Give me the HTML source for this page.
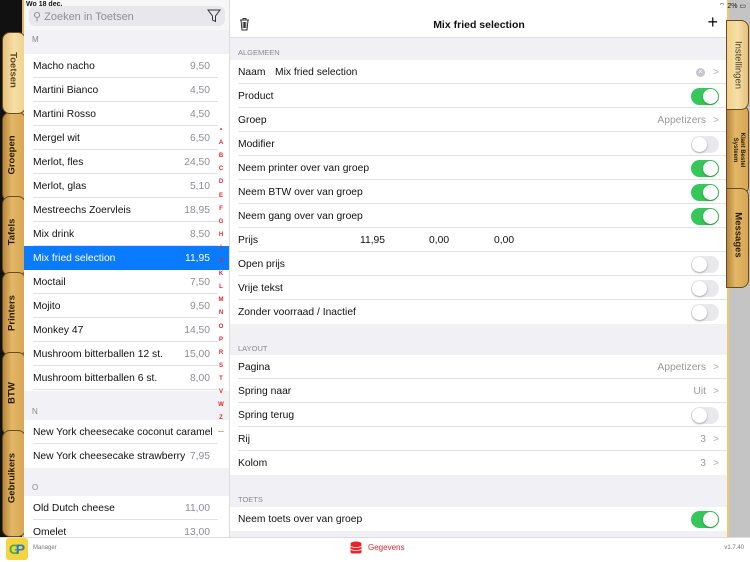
<!DOCTYPE html>
<html><head><meta charset="utf-8"><style>
*{margin:0;padding:0;box-sizing:border-box}
body{width:750px;height:562px;overflow:hidden;font-family:"Liberation Sans",sans-serif;font-size:10.3px;color:#111;background:#fff;position:relative}
.a{position:absolute}
.row{position:absolute;height:24px;line-height:24px;left:0;right:0}
.row>span{top:1px}
.ln{position:absolute;bottom:0;height:1px;background:#e2e2e6}
.tab{position:absolute;background:linear-gradient(90deg,#b8863e,#e2b766 40%,#d6a654);border-radius:8px;border:1px solid #6b4a1c}
.tv{position:absolute;white-space:nowrap;font-weight:bold;font-size:9.5px;color:#2a1a05}
.sw{position:absolute;width:28px;height:17px;border-radius:9px;right:9px;top:4px}
.on{background:#35c759}.off{background:#e9e9eb}
.sw i{position:absolute;top:1px;width:15px;height:15px;border-radius:50%;background:#fff;box-shadow:0 1px 2px rgba(0,0,0,.3)}
.on i{right:1px}.off i{left:1px}
.gv{position:absolute;right:22px;color:#9a9a9e}
.chev{position:absolute;right:9px;color:#b0b0b4;font-size:10px}
.sect{position:absolute;left:8px;font-size:7.5px;color:#8a8a8e}
</style></head><body>
<div class="a" style="left:0;top:0;width:24px;height:537px;background:#111"></div>
<div class="a" style="left:22px;top:0;width:2px;height:537px;background:#e0b560"></div>
<div class="tab" style="left:2px;top:112px;width:24px;height:90px"></div>
<div class="tab" style="left:2px;top:196px;width:24px;height:80px"></div>
<div class="tab" style="left:2px;top:272px;width:24px;height:84px"></div>
<div class="tab" style="left:2px;top:352px;width:24px;height:84px"></div>
<div class="tab" style="left:2px;top:430px;width:24px;height:107px"></div>
<div class="tab" style="left:2px;top:32px;width:24px;height:82px;background:linear-gradient(90deg,#e6c07a,#f6dfa8 50%,#f0d08a)"></div>
<div class="tv" style="left:13px;top:70px;transform:translate(-50%,-50%) rotate(90deg);color:#5a4520">Toetsen</div>
<div class="tv" style="left:12px;top:155px;transform:translate(-50%,-50%) rotate(-90deg)">Groepen</div>
<div class="tv" style="left:12px;top:232px;transform:translate(-50%,-50%) rotate(-90deg)">Tafels</div>
<div class="tv" style="left:12px;top:313px;transform:translate(-50%,-50%) rotate(-90deg)">Printers</div>
<div class="tv" style="left:12px;top:393px;transform:translate(-50%,-50%) rotate(-90deg)">BTW</div>
<div class="tv" style="left:12px;top:478px;transform:translate(-50%,-50%) rotate(-90deg)">Gebruikers</div>

<div class="a" style="left:24px;top:0;width:206px;height:537px;background:#fff;overflow:hidden">
 <div class="a" style="left:0;top:0;width:206px;height:30px;background:#f7f7f7"></div>
 <div class="a" style="left:2px;top:1px;font-size:7px;font-weight:bold">Wo 18 dec.</div>
 <div class="a" style="left:5px;top:6px;width:196px;height:20px;border-radius:6px;background:#e8e8ec"></div>
 <div class="a" style="left:9px;top:10px;font-size:11px;color:#8e8e93">⚲ Zoeken in Toetsen</div>
 <svg class="a" style="left:183px;top:9px" width="14" height="14" viewBox="0 0 14 14"><path d="M1 1h12L8.5 7v5.5L5.5 11V7z" fill="none" stroke="#333" stroke-width="1"/></svg>
 <div class="a" style="left:0;top:30px;width:206px;height:24px;background:#f2f2f6"></div>
 <div class="a" style="left:8px;top:35px;font-size:8px;color:#888">M</div>
 <div id="list"></div>
</div>
<div class="a" style="left:229px;top:0;width:1px;height:537px;background:#ddd"></div>

<div class="a" style="left:230px;top:0;width:498px;height:537px;background:#f0f0f5;overflow:hidden">
 <div class="a" style="left:0;top:0;width:498px;height:38px;background:#fff;border-bottom:1px solid #ddd"></div>
 <svg class="a" style="left:9px;top:17px" width="11" height="14" viewBox="0 0 11 14"><path d="M1 3h9M4 3V1.5h3V3M2 3l1 10h5l1-10M4.2 5v6M5.5 5v6M6.8 5v6" fill="none" stroke="#333" stroke-width="1"/></svg>
 <div class="a" style="left:0;width:498px;top:19px;text-align:center;font-size:10.5px;font-weight:bold">Mix fried selection</div>
 <div class="a" style="right:10px;top:12px;font-size:18px;font-weight:300">+</div>
 <div class="sect" style="top:48px">ALGEMEEN</div>
 <div class="sect" style="top:344px">LAYOUT</div>
 <div class="sect" style="top:495px">TOETS</div>
 <div id="rows"></div>
</div>

<div class="a" style="left:728px;top:0;width:22px;height:537px;background:#c4c4c4"></div>
<div class="a" style="left:727px;top:0;width:2px;height:537px;background:#f0c86e"></div>
<div class="tab" style="left:726px;top:105px;width:23px;height:90px;border-radius:0 8px 8px 0"></div>
<div class="tab" style="left:726px;top:188px;width:23px;height:100px;border-radius:0 8px 8px 0"></div>
<div class="tab" style="left:726px;top:20px;width:23px;height:90px;border-radius:0 8px 8px 0;background:linear-gradient(90deg,#f0d08a,#f6dfa8 50%,#e6c07a)"></div>
<div class="tv" style="left:738px;top:65px;transform:translate(-50%,-50%) rotate(90deg);font-weight:normal;color:#4a3a20">Instellingen</div>
<div class="tv" style="left:738px;top:150px;transform:translate(-50%,-50%) rotate(90deg);font-size:6px;text-align:center;line-height:7px">Klant Bestel<br>Systeem</div>
<div class="tv" style="left:738px;top:235px;transform:translate(-50%,-50%) rotate(90deg)">Messages</div>
<div class="a" style="right:4px;top:2px;font-size:7px">⌔ 2% ▭</div>

<div class="a" style="left:0;top:537px;width:750px;height:25px;background:#fff;border-top:1px solid #ddd"></div>
<div class="a" style="left:6px;top:538px;width:22px;height:22px;background:#f5d341;border-radius:3px;font-weight:bold;font-size:14px;line-height:22px;text-align:center"><span style="color:#47b04b">G</span><span style="color:#2a7ec8;margin-left:-4px">P</span></div>
<div class="a" style="left:33px;top:545px;font-size:6px;color:#777">Manager</div>
<svg class="a" style="left:350px;top:541px" width="12" height="14" viewBox="0 0 12 14"><ellipse cx="6" cy="2.5" rx="5.5" ry="2" fill="#e8242b"/><rect x=".5" y="2.5" width="11" height="10" rx="2" fill="#e8242b"/><path d="M.5 5.5q5.5 2 11 0M.5 8.5q5.5 2 11 0" stroke="#fff" stroke-width=".7" fill="none"/></svg>
<div class="a" style="left:368px;top:543px;font-size:8px;color:#e8242b">Gegevens</div>
<div class="a" style="right:6px;top:545px;font-size:6px;color:#777">v1.7.40</div>

<script>
var items=[["Macho nacho","9,50"],["Martini Bianco","4,50"],["Martini Rosso","4,50"],["Mergel wit","6,50"],["Merlot, fles","24,50"],["Merlot, glas","5,10"],["Mestreechs Zoervleis","18,95"],["Mix drink","8,50"],["Mix fried selection","11,95"],["Moctail","7,50"],["Mojito","9,50"],["Monkey 47","14,50"],["Mushroom bitterballen 12 st.","15,00"],["Mushroom bitterballen 6 st.","8,00"]];
var h="",y=54;
items.forEach(function(it,i){var sel=i==8;
h+='<div class="row" style="top:'+y+'px;'+(sel?'background:#0a7aff;color:#fff':'')+'"><span style="position:absolute;left:9px">'+it[0]+'</span><span style="position:absolute;right:20px;color:'+(sel?'#fff':'#8e8e93')+'">'+it[1]+'</span>'+(sel?'':'<div class="ln" style="left:9px;right:12px"></div>')+'</div>';y+=24;});
h+='<div class="a" style="left:0;top:391px;width:206px;height:29px;background:#f2f2f6"></div><div class="a" style="left:8px;top:407px;font-size:8px;color:#888">N</div>';
h+='<div class="row" style="top:420px"><span style="position:absolute;left:9px">New York cheesecake coconut caramel</span><span style="position:absolute;right:20px;color:#8e8e93">...</span><div class="ln" style="left:9px;right:12px"></div></div>';
h+='<div class="row" style="top:444px"><span style="position:absolute;left:9px">New York cheesecake strawberry</span><span style="position:absolute;right:20px;color:#8e8e93">7,95</span></div>';
h+='<div class="a" style="left:0;top:468px;width:206px;height:28px;background:#f2f2f6"></div><div class="a" style="left:8px;top:483px;font-size:8px;color:#888">O</div>';
h+='<div class="row" style="top:496px"><span style="position:absolute;left:9px">Old Dutch cheese</span><span style="position:absolute;right:20px;color:#8e8e93">11,00</span><div class="ln" style="left:9px;right:12px"></div></div>';
h+='<div class="row" style="top:520px"><span style="position:absolute;left:9px">Omelet</span><span style="position:absolute;right:20px;color:#8e8e93">13,00</span></div>';
var L="•ABCDEFGHIJKLMNOPRSTVWZ…".split("");
L.forEach(function(c,i){h+='<div class="a" style="left:192px;width:10px;text-align:center;top:'+(127+i*13.1)+'px;font-size:6px;font-weight:bold;color:#e8242b">'+c+'</div>';});
document.getElementById("list").innerHTML=h;
var R=[[60,"Naam","naam"],[84,"Product","on"],[108,"Groep","g:Appetizers"],[132,"Modifier","off"],[156,"Neem printer over van groep","on"],[180,"Neem BTW over van groep","on"],[204,"Neem gang over van groep","on"],[228,"Prijs","prijs"],[252,"Open prijs","off"],[276,"Vrije tekst","off"],[300,"Zonder voorraad / Inactief","off",1],
[355,"Pagina","g:Appetizers"],[379,"Spring naar","g:Uit"],[403,"Spring terug","off"],[427,"Rij","g:3"],[451,"Kolom","g:3",1],[507,"Neem toets over van groep","on",1]];
var d="";
R.forEach(function(r){var x='<div class="row" style="top:'+r[0]+'px;background:#fff"><span style="position:absolute;left:8px">'+r[1]+'</span>';
if(r[2]=="on"||r[2]=="off")x+='<div class="sw '+r[2]+'"><i></i></div>';
else if(r[2]=="naam")x+='<span style="position:absolute;left:45px">Mix fried selection</span><span style="position:absolute;right:23px;top:8px;width:9px;height:9px;border-radius:50%;background:#c7c7cc;color:#fff;font-size:7px;line-height:9px;text-align:center">×</span><span class="chev">&gt;</span>';
else if(r[2]=="prijs")x+='<span style="position:absolute;left:130px">11,95</span><span style="position:absolute;left:199px">0,00</span><span style="position:absolute;left:264px">0,00</span>';
else x+='<span class="gv">'+r[2].slice(2)+'</span><span class="chev">&gt;</span>';
if(!r[3])x+='<div class="ln" style="left:8px;right:0"></div>';
d+=x+'</div>';});
document.getElementById("rows").innerHTML=d;
</script>
</body></html>
